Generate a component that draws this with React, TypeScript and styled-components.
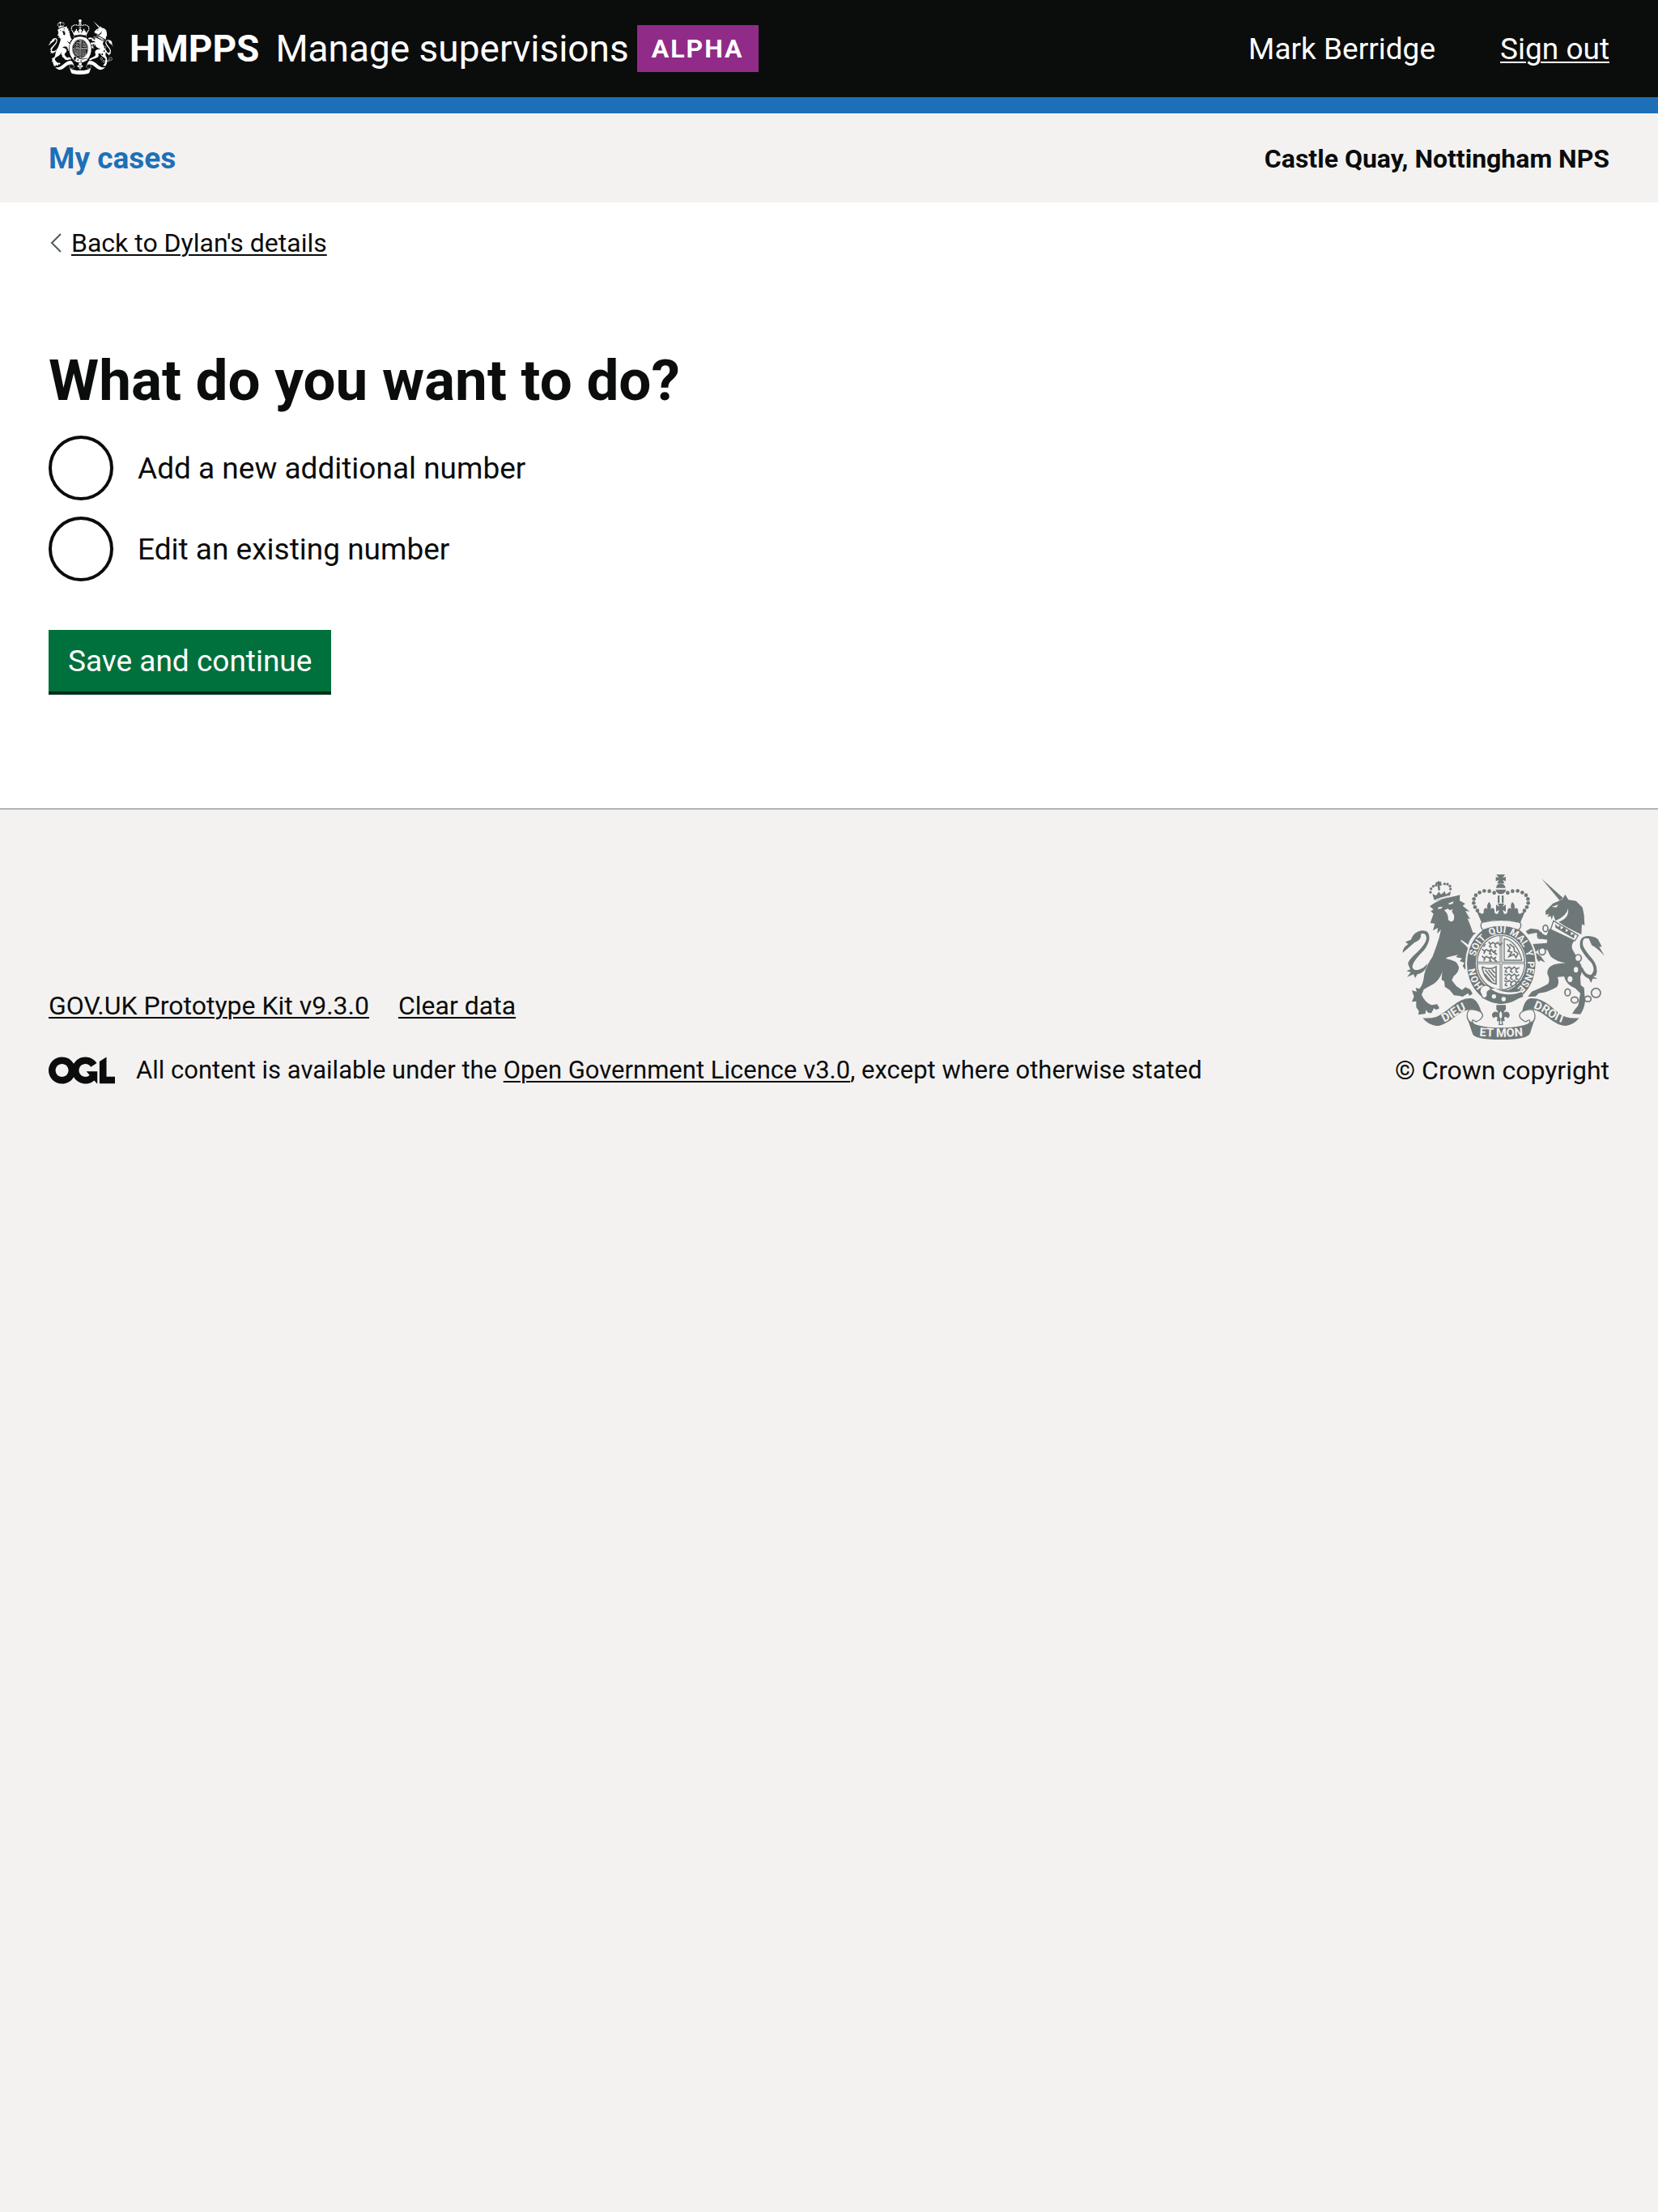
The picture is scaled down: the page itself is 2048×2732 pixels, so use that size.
import React from "react";
import styled, { createGlobalStyle } from "styled-components";

const ink = "#0b0c0c";
const paper = "#f3f2f1";
const blue = "#1d70b8";
const arms = "#6f7879";

const GlobalStyle = createGlobalStyle`
  *, *::before, *::after { box-sizing: border-box; }
  html { background: ${paper}; }
  body {
    margin: 0;
    color: ${ink};
    font-family: Roboto, "Liberation Sans", sans-serif;
    font-size: 32px;
    line-height: 40px;
  }
`;

const Bar = styled.div`
  display: flex;
  align-items: center;
  justify-content: space-between;
  padding: 0 60px;
`;

const Header = styled.header`
  background: ${ink};
  color: #fff;
  border-bottom: 20px solid ${blue};
`;

const HeaderBar = styled(Bar)`
  height: 120px;
`;

const Brand = styled.a`
  display: flex;
  align-items: center;
  color: inherit;
  text-decoration: none;
  font-size: 46px;
  line-height: 60px;
`;

const Crest = styled.span`
  padding-bottom: 4px;
  line-height: 0;
`;

const Organisation = styled.strong`
  margin: 0 20px;
`;

const Tag = styled.strong`
  margin-left: 10px;
  padding: 9px 18px;
  background: #912b88;
  color: #fff;
  font-size: 32px;
  line-height: 40px;
  letter-spacing: 2px;
`;

const Account = styled.nav`
  display: flex;
  gap: 80px;
  padding-top: 2px;
  font-size: 37px;
  line-height: 50px;
`;

const TextLink = styled.a`
  color: inherit;
  text-decoration: underline;
  text-decoration-thickness: 2px;
  text-underline-offset: 3px;
`;

const SubNav = styled.div`
  background: ${paper};
`;

const SubNavBar = styled(Bar)`
  height: 110px;
  padding-top: 2px;
  font-weight: 700;
`;

const SectionLink = styled.a`
  color: ${blue};
  text-decoration: none;
  font-size: 37px;
  line-height: 50px;
`;

const Content = styled.div`
  background: #fff;
  padding: 30px 60px 144px;
`;

const BackRow = styled.div`
  display: flex;
  align-items: center;
  gap: 10px;
`;

const Main = styled.main`
  padding-top: 110px;
`;

const Fieldset = styled.fieldset`
  margin: 0 0 60px;
  padding: 0;
  border: 0;
  min-width: 0;
`;

const Legend = styled.legend`
  padding: 0;
  margin-bottom: 28px;
`;

const Title = styled.h1`
  margin: 0;
  font-size: 71px;
  line-height: 80px;
  font-weight: 700;
`;

const RadioList = styled.div`
  display: flex;
  flex-direction: column;
  gap: 20px;
`;

const RadioRow = styled.label`
  display: flex;
  align-items: center;
  gap: 30px;
  font-size: 37px;
  line-height: 50px;
`;

const RadioText = styled.span`
  padding-top: 2px;
`;

const Radio = styled.input`
  appearance: none;
  flex: none;
  width: 80px;
  height: 80px;
  margin: 0;
  border: 4px solid ${ink};
  border-radius: 50%;
  background: #fff;
  &:checked {
    background: radial-gradient(${ink} 20px, #fff 21px);
  }
`;

const Submit = styled.button`
  display: block;
  padding: 14px 24px 12px;
  border: 0;
  border-radius: 0;
  background: #00703c;
  box-shadow: 0 4px 0 #002d18;
  color: #fff;
  font: inherit;
  font-size: 37px;
  line-height: 50px;
`;

const Footer = styled.footer`
  display: flex;
  align-items: flex-end;
  justify-content: space-between;
  padding: 80px 60px;
  border-top: 2px solid #b1b4b6;
`;

const FooterMeta = styled.div`
  display: flex;
  flex-direction: column;
  gap: 40px;
`;

const FooterLinks = styled.nav`
  display: flex;
  gap: 36px;
`;

const Licence = styled.div`
  display: flex;
  align-items: center;
  gap: 26px;
  font-size: 31px;
`;

const Copyright = styled.a`
  display: flex;
  flex-direction: column;
  align-items: flex-end;
  gap: 18px;
  color: inherit;
  text-decoration: none;
`;

const FooterArms = styled.span`
  padding-right: 6px;
  line-height: 0;
`;

type ArmsProps = { color: string; ground: string; width: number; height: number; lettered?: boolean };

const crownBeads: [number, number][] = [
  [437, 128], [419, 122], [400, 121], [383, 127], [369, 137], [362, 151], [361, 166], [366, 181], [375, 194],
];

const garterWords: [string, string][] = [
  ["HON", "17%"], ["SOIT", "35%"], ["QUI", "48%"], ["MAL", "60%"], ["Y", "69.5%"], ["PENSE", "82%"],
];

function RoyalArms({ color, ground, width, height, lettered }: ArmsProps) {
  return (
    <svg width={width} height={height} viewBox="96 60 750 612" preserveAspectRatio="none" aria-hidden="true">
      <defs>
        <path id="garter" d="M463 505A98 114 0 0 1 463 277A98 114 0 0 1 463 505" />
        <path id="dieu" d="M230 616Q262 606 292 585T356 554" />
        <path id="droit" d="M562 550Q604 560 636 583T714 616" />
        <path id="mon" d="M360 656Q461 668 566 656" />
      </defs>
      <g fill={color} stroke="none">
        {/* lion */}
        <path d="M198 178Q222 160 250 150L310 136L309 157L330 169L320 176L346 197L330 196L348 226L338 223Q350 250 358 275L370 277L360 284Q346 300 340 322L312 306Q350 335 368 378L374 418L362 408L350 412L342 402L328 412L320 398L327 388L309 381L318 371L295 366L303 358L276 364Q262 366 258 372Q300 378 306 402Q308 420 286 438L280 452L297 474L318 488L330 478L348 486L357 502L346 510L340 500L320 513L308 510L288 508L272 488L254 476L252 456L242 450L246 400L244 422Q236 448 212 466L176 486L168 506Q182 536 206 544L226 541L234 556L222 562L214 556L204 574L192 572L184 562L182 576L156 580L158 566L148 552L148 530L132 532L140 512L132 490L150 494L146 480L160 484Q174 470 178 430Q186 396 208 366Q222 330 232 298L240 264L226 280L228 258L210 268L217 242L200 240L212 206L202 196L212 190Z" />
        <path d="M128 302Q140 272 168 268Q200 266 196 302Q190 330 164 354Q132 388 134 404Q142 424 176 404L190 390L184 408Q170 428 152 430L144 444L138 430L114 440L128 422L112 418L126 412L118 392Q116 380 152 348Q186 314 186 296Q184 274 166 280Q168 304 142 312L98 350Q96 334 118 318L108 310Z" />
        <path d="M216 160L208 132L222 138L232 124L240 134L254 122L258 134L276 122L273 142Z" />
      </g>
      <g fill={color}>
        {[[201, 126], [203, 113], [211, 104], [221, 100], [238, 97], [253, 95], [264, 96], [273, 103], [275, 114]].map(([x, y]) => (
          <circle key={`${x}-${y}`} cx={x} cy={y} r="5" />
        ))}
        <path d="M220 90l7-2 3-4 5 3 6-1-1 7-6 1 3 24-7 2-4-24-6 1z" />
      </g>
      <g fill={ground}>
        <path d="M212 156Q250 138 300 134L301 138Q250 144 214 161Z" />
        <path d="M228 182l18-3-6 8-10 1zM266 168l20-8-2 8-12 4z" />
        <path d="M252 192l14-5 6 6 12-4-4 8 8 14q4 22-10 24q-14-2-12-18l-4-12z" />
        <path d="M312 306Q345 325 362 358L366 352Q350 324 316 303Z" />
      </g>
      {/* unicorn */}
      <g fill={color}>
        <path d="M612 75L693 148L680 157Z" />
        <path d="M627 196L654 168L690 152L700 134L712 154L740 158L764 182L770 210L772 250L762 244L760 282L746 276L700 252L676 236L664 232L656 210L650 228L646 214L634 218L640 206L628 210Z" />
        <path d="M640 262Q690 275 734 306Q722 318 726 336L752 382Q770 408 756 440L758 470L770 480L774 530Q770 560 756 578L726 576L736 560L748 546L756 500L738 482Q704 470 696 438L672 440Q680 464 668 478Q630 500 602 500L590 512L562 513L576 494Q600 486 636 466Q646 450 634 428Q632 394 680 390L702 388Q668 384 646 364L634 340L604 336L590 348L610 364L626 386L608 378L602 384L588 362L568 342L578 318L632 314L634 302L606 298L594 276L562 282L554 270L572 260L600 264Q622 290 632 284Z" />
        <path d="M846 362Q820 334 798 322L788 298Q760 290 766 324Q776 346 800 372Q826 404 814 434L804 438L820 446L802 446L796 462L788 446Q766 440 754 404L764 404Q776 434 796 432Q814 416 798 388Q770 360 756 332Q748 288 786 288Q820 290 826 308L836 328L826 328Z" />
      </g>
      <g fill={ground}>
        <path d="M650 180l24-8-6 10z" />
        <path d="M664 232Q706 214 711 186Q716 226 668 238Z" />
        <path d="M657 232L748 286L736 306L646 264Z" stroke={color} strokeWidth="4" />
        {[[748, 370, 11], [740, 413, 8], [718, 448, 9]].map(([x, y, r]) => (
          <ellipse key={x} cx={x} cy={y} rx={r} ry={r + 2} />
        ))}
      </g>
      <path d="M664 257L663 244L674 254L682 248L684 265L694 256L702 262L702 274L714 266L722 274L720 284L736 280L732 297Z" fill={color} />
      <g fill="none" stroke={color} strokeWidth="5">
        <ellipse cx="627" cy="260" rx="9" ry="12" />
        <ellipse cx="606" cy="286" rx="8" ry="11" />
        <ellipse cx="615" cy="345" rx="12" ry="13" fill={ground} />
        <ellipse cx="748" cy="370" rx="12" ry="13" />
        <ellipse cx="709" cy="497" rx="10" ry="13" />
        <ellipse cx="735" cy="525" rx="13" ry="11" />
        <ellipse cx="784" cy="521" rx="12" ry="10" />
        <circle cx="814" cy="499" r="17" />
      </g>
      {/* garter and shield */}
      <ellipse cx="463" cy="391" rx="133" ry="154" fill={ground} />
      <ellipse cx="463" cy="391" rx="127" ry="148" fill={color} />
      <ellipse cx="462" cy="387" rx="93" ry="106" fill={ground} />
      <ellipse cx="462" cy="387" rx="88" ry="101" fill="none" stroke={color} strokeWidth="4" />
      <path d="M462 286V488M374 388H550" stroke={color} strokeWidth="9" />
      <path d="M462 286V488M374 388H550" stroke={ground} strokeWidth="3" />
      <g fill="none" stroke={color} strokeWidth="5">
        <path d="M474 298V378H540M474 298Q520 306 540 378" strokeWidth="4" />
        <path d="M484 318l12 14-8 12 14 4-10 16 18-8 8 12 8-16M494 318l16 12 2 14 12 8" />
        {[310, 336, 362].map((y) => (
          <path key={y} d={`M${y === 310 ? 416 : 392} ${y}l8 8 8-6 10 6 8-6 8 10 10-8M404 ${y + 8}l-6 10M424 ${y + 6}l-4 12 8 2M440 ${y + 6}l0 12 8 2`} />
        ))}
        {[404, 430, 454].map((y) => (
          <path key={y} d={`M474 ${y}l10 4 8-5 10 7 10-7 8 8 10-6M482 ${y + 8}l-4 8 8 4M500 ${y + 7}l-2 9 8 4M518 ${y + 8}l0 9 8 2`} />
        ))}
        <path d="M392 402Q420 416 444 402V466Q400 456 392 402M404 414L438 456M416 414L440 442M428 412L440 426M402 428L430 462" />
      </g>
      <path d="M400 482Q392 470 404 470L418 476L430 486Q462 494 520 486L546 512L500 530L462 540Q420 534 392 516Z" fill={color} />
      <path d="M384 494Q384 474 404 470Q426 474 424 488Q406 492 412 508Q404 524 394 516Z" fill={ground} stroke={color} strokeWidth="4" />
      <g fill={ground}>
        <circle cx="436" cy="512" r="8" />
        <circle cx="472" cy="522" r="8" />
        <path d="M426 486Q480 520 548 492L546 488Q490 508 440 482Z" />
      </g>
      {/* crown */}
      <g fill={color}>
        <path d="M445 60h32l-8 12 11-3v16l-11-4 6 12h-27l6-12-11 4v-16l11 3z" />
        <path d="M444 110Q446 94 461 94T479 110ZM442 116H481Q478 132 461 133Q446 132 442 116Z" />
        <path d="M450 138H457V166H450ZM465 138H472V166H465Z" />
        {crownBeads.map(([x, y]) => (
          <React.Fragment key={x}>
            <circle cx={x} cy={y} r="7" />
            <circle cx={924 - x} cy={y} r="7" />
          </React.Fragment>
        ))}
        <path d="M372 196L392 206Q400 206 398 192Q404 180 412 188Q408 172 418 162Q428 172 424 188Q434 180 438 192Q436 208 450 206L456 192L444 198V172L456 180L450 168H474L468 180L480 172V198L468 192L474 206Q488 208 486 192Q492 180 500 188Q496 172 504 162Q516 172 512 188Q520 180 526 192Q524 206 532 206L552 196L534 238Q461 218 390 238Z" />
      </g>
      <path d="M391 238Q461 220 533 238Q542 254 526 266Q461 240 396 266Q382 254 391 238Z" fill={ground} stroke={color} strokeWidth="4" />
      {/* plinth and motto scroll */}
      <path d="M445 544H480V560Q474 564 472 572Q488 562 494 578Q496 590 484 592Q482 584 474 590L476 604H447L449 590Q440 584 438 592Q428 590 429 578Q436 562 452 572Q450 564 445 560Z" fill={color} />
      <path d="M461 562Q474 580 464 596L468 616H455L459 596Q448 580 461 562Z" fill={ground} stroke={color} strokeWidth="4" />
      <g fill={color}>
        <path d="M172 592Q200 594 222 588Q250 574 284 546Q320 516 352 519Q376 522 390 572Q372 558 346 560Q318 564 286 592Q248 622 222 621Q190 616 172 592Z" />
        <path d="M752 592Q724 594 702 588Q676 576 644 546Q606 516 572 519Q548 522 540 572Q554 558 578 560Q606 564 638 592Q676 622 702 621Q734 616 752 592Z" />
        <path d="M340 600Q372 628 461 628T586 600L570 648Q562 672 461 672T356 648Z" />
      </g>
      <g fill={ground} stroke={color} strokeWidth="4">
        <path d="M344 561Q330 582 342 602L360 614Q348 590 370 606Q404 590 390 572Q370 558 344 561Z" />
        <path d="M580 561Q594 582 584 602L566 614Q576 590 554 606Q520 590 536 572Q554 558 580 561Z" />
      </g>
      {lettered && (
        <g fill={ground} fontFamily="Roboto, sans-serif" fontWeight="700" textAnchor="middle">
          <g fontSize="36">
            {garterWords.map(([word, at]) => (
              <text key={word}>
                <textPath href="#garter" startOffset={at}>{word}</textPath>
              </text>
            ))}
          </g>
          <g fontSize="44">
            <text><textPath href="#dieu" startOffset="50%">DIEU</textPath></text>
            <text><textPath href="#droit" startOffset="50%">DROIT</textPath></text>
            <text><textPath href="#mon" startOffset="50%">ET MON</textPath></text>
          </g>
        </g>
      )}
    </svg>
  );
}

function OglLogo() {
  return (
    <svg width="82" height="34" viewBox="0 0 483.2 195.7" role="img" aria-label="Open Government Licence">
      <path
        fill={ink}
        d="M421.5 142.8V.1l-50.7 32.3v161.1h112.4v-50.7zm-122.3-9.6A47.12 47.12 0 0 1 221 97.8c0-26 21.1-47.1 47.1-47.1 16.7 0 31.4 8.7 39.7 21.8l42.7-27.2A97.63 97.63 0 0 0 268.1 0c-36.5 0-68.3 20.1-85.1 49.7A98 98 0 0 0 97.8 0C43.9 0 0 43.9 0 97.8s43.9 97.8 97.8 97.8c36.5 0 68.3-20.1 85.1-49.7a97.76 97.76 0 0 0 149.6 25.4l19.4 22.2h3v-87.8h-80l24.3 27.5zM97.8 145c-26 0-47.1-21.1-47.1-47.1s21.1-47.1 47.1-47.1 47.1 21.1 47.1 47.1S123.8 145 97.8 145"
      />
    </svg>
  );
}

function Chevron() {
  return (
    <svg width="18" height="24" viewBox="0 0 18 24" aria-hidden="true">
      <path d="M15 1L4 12L15 23" fill="none" stroke="#505a5f" strokeWidth="2" />
    </svg>
  );
}

const choices = [
  { id: "add-number", label: "Add a new additional number" },
  { id: "edit-number", label: "Edit an existing number" },
];

export default function App() {
  return (
    <>
      <GlobalStyle />
      <Header>
        <HeaderBar>
          <Brand href="#home">
            <Crest>
              <RoyalArms color="#fff" ground={ink} width={80} height={68} />
            </Crest>
            <Organisation>HMPPS</Organisation>
            <span>Manage supervisions</span>
            <Tag>ALPHA</Tag>
          </Brand>
          <Account>
            <span>Mark Berridge</span>
            <TextLink href="#sign-out">Sign out</TextLink>
          </Account>
        </HeaderBar>
      </Header>
      <SubNav>
        <SubNavBar>
          <SectionLink href="#cases">My cases</SectionLink>
          <span>Castle Quay, Nottingham NPS</span>
        </SubNavBar>
      </SubNav>
      <Content>
        <BackRow>
          <Chevron />
          <TextLink href="#details">Back to Dylan's details</TextLink>
        </BackRow>
        <Main>
          <form onSubmit={(event) => event.preventDefault()}>
            <Fieldset>
              <Legend>
                <Title>What do you want to do?</Title>
              </Legend>
              <RadioList>
                {choices.map(({ id, label }) => (
                  <RadioRow key={id} htmlFor={id}>
                    <Radio type="radio" name="action" id={id} value={id} />
                    <RadioText>{label}</RadioText>
                  </RadioRow>
                ))}
              </RadioList>
            </Fieldset>
            <Submit type="submit">Save and continue</Submit>
          </form>
        </Main>
      </Content>
      <Footer>
        <FooterMeta>
          <FooterLinks>
            <TextLink href="#kit">GOV.UK Prototype Kit v9.3.0</TextLink>
            <TextLink href="#clear">Clear data</TextLink>
          </FooterLinks>
          <Licence>
            <OglLogo />
            <span>
              All content is available under the <TextLink href="#licence">Open Government Licence v3.0</TextLink>, except
              where otherwise stated
            </span>
          </Licence>
        </FooterMeta>
        <Copyright href="#copyright">
          <FooterArms>
            <RoyalArms color={arms} ground={paper} width={250} height={204} lettered />
          </FooterArms>
          © Crown copyright
        </Copyright>
      </Footer>
    </>
  );
}
